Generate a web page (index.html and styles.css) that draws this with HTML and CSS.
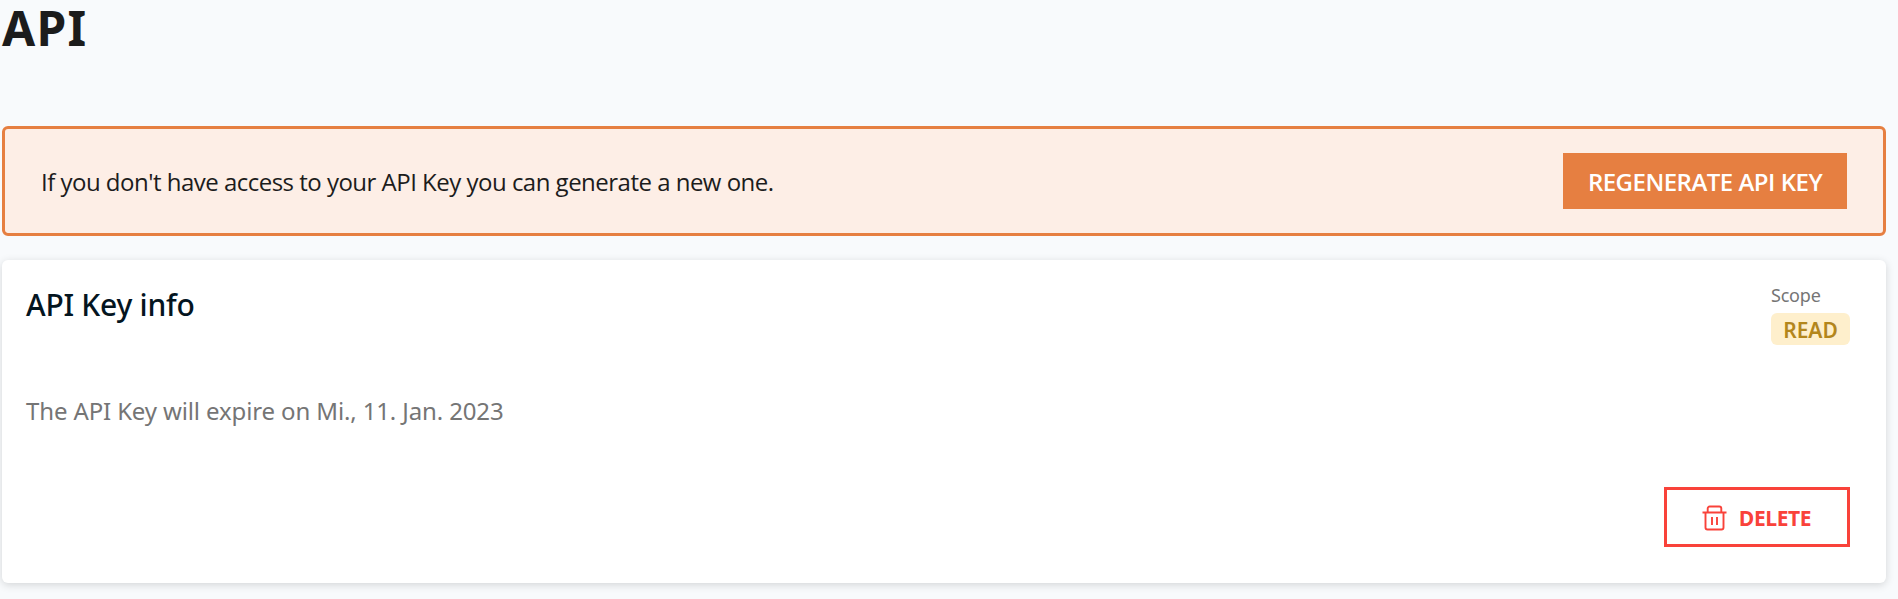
FILE: index.html
```html
<!DOCTYPE html>
<html lang="en">
<head>
<meta charset="utf-8">
<title>API</title>
<link rel="stylesheet" href="styles.css">
</head>
<body>
<main class="page">
  <h1 class="page-title">API</h1>
  <section class="alert">
    <p class="alert-text">If you don't have access to your API Key you can generate a new one.</p>
    <button class="btn-primary"><span>REGENERATE API KEY</span></button>
  </section>
  <section class="card">
    <div class="card-head">
      <h2 class="card-title">API Key info</h2>
      <div class="scope">
        <span class="scope-label">Scope</span>
        <span class="badge">READ</span>
      </div>
    </div>
    <p class="expiry">The API Key will expire on Mi., 11. Jan. 2023</p>
    <div class="card-actions">
      <button class="btn-delete">
        <svg class="icon" width="25" height="26" viewBox="0 0 25 26" fill="none" stroke="currentColor" stroke-width="1.900">
          <path d="M.5 7.500h24M5.700 7V3.500a2 2 0 0 1 2-2h9.600a2 2 0 0 1 2 2V7M3.500 7.500v15a2 2 0 0 0 2 2h14a2 2 0 0 0 2-2v-15M10 12v8M15 12v8"/>
        </svg>
        <span>DELETE</span>
      </button>
    </div>
  </section>
</main>
</body>
</html>
```
FILE: styles.css
```css
* { box-sizing: border-box; margin: 0; }
body {
  background: #f8fafc;
  color: #1c1c1c;
  font-family: "Noto Sans", sans-serif;
}
.page { min-height: 599px; padding: 0 12px 16px 2px; }
.page-title {
  height: 126px;
  font-size: 48px;
  line-height: 56px;
  font-weight: 700;
  letter-spacing: 1.2px;
}
.alert {
  display: flex;
  align-items: center;
  justify-content: space-between;
  height: 110px;
  padding: 0 36px;
  border: 3px solid #e67f41;
  border-radius: 6px;
  background: #fdeee6;
  font-family: "Open Sans", sans-serif;
}
.alert-text {
  padding-top: 2px;
  font-size: 24px;
  line-height: 32px;
  letter-spacing: -.51px;
  white-space: nowrap;
}
.btn-primary {
  width: 284px;
  height: 56px;
  padding: 2px 0 0;
  border: 0;
  background: #e67f41;
  color: #fff;
  font: 600 24px/32px "Open Sans", sans-serif;
  letter-spacing: -.5px;
  white-space: nowrap;
}
.card {
  display: flex;
  flex-direction: column;
  height: 323px;
  margin-top: 24px;
  padding: 24px 36px 36px 24px;
  border-radius: 6px;
  background: #fff;
  box-shadow: 0 2px 8px rgba(0, 0, 0, .15);
}
.card-head { display: flex; justify-content: space-between; height: 109px; }
.card-title {
  color: #04151f;
  font-size: 30px;
  line-height: 42px;
  font-weight: 500;
  letter-spacing: -.25px;
}
.scope { display: flex; flex-direction: column; width: 79px; }
.scope-label { height: 29px; color: #757575; font-size: 18px; line-height: 22px; letter-spacing: -.2px; }
.badge {
  height: 32px;
  border-radius: 6px;
  background: #feefcc;
  color: #b3861c;
  font-size: 21px;
  line-height: 35px;
  font-weight: 600;
  text-align: center;
}
.expiry {
  color: #757575;
  font-size: 24px;
  line-height: 36px;
  letter-spacing: -.13px;
  white-space: nowrap;
}
.card-actions { display: flex; justify-content: flex-end; margin-top: auto; }
.btn-delete {
  display: flex;
  align-items: center;
  justify-content: center;
  gap: 12px;
  width: 186px;
  height: 60px;
  padding: 2px 1px 0 0;
  border: 3px solid #f9423a;
  background: #fff;
  color: #f9423a;
  font: 700 21px/28px "Open Sans", sans-serif;
  letter-spacing: -.4px;
}
```
